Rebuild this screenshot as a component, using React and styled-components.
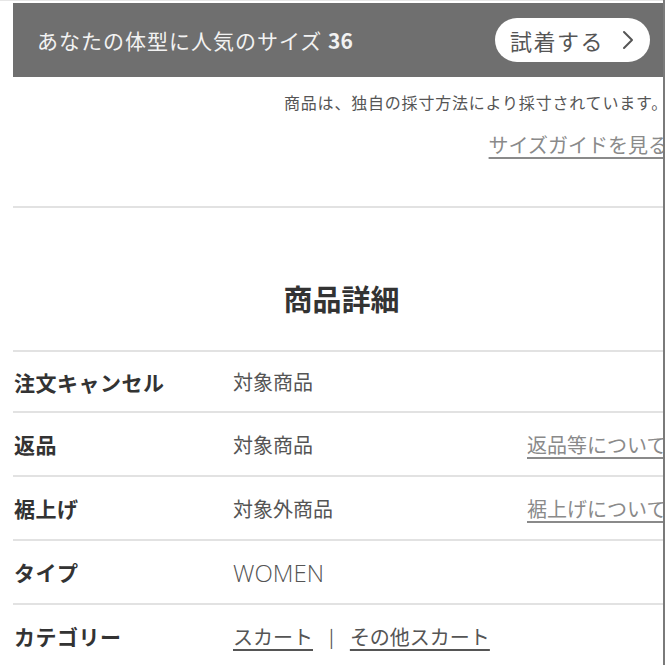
import React from 'react';
import styled, { createGlobalStyle } from 'styled-components';

const GlobalStyle = createGlobalStyle`
	html, body {
		margin: 0;
		padding: 0;
		background: #fff;
	}
	body {
		font-family: 'Noto Sans CJK JP', 'Noto Sans', sans-serif;
		color: #333;
	}
`;

const details = [
	{ label: '注文キャンセル', value: '対象商品', first: true },
	{ label: '返品', value: '対象商品', link: '返品等について' },
	{ label: '裾上げ', value: '対象外商品', link: '裾上げについて' },
	{ label: 'タイプ', value: 'WOMEN', latin: true },
	{ label: 'カテゴリー', categories: ['スカート', 'その他スカート'] },
];

const App = () => {
	return (
		<>
			<GlobalStyle />
			<Frame>
				<Page>
					<SizeBanner>
						<BannerText>
							あなたの体型に人気のサイズ <SizeNumber>36</SizeNumber>
						</BannerText>
						<TryButton>
							試着する
							<svg width='16' height='22' viewBox='0 0 16 22'>
								<path
									d='M4 3 L12 11 L4 19'
									fill='none'
									stroke='#555'
									strokeWidth='2'
									strokeLinecap='round'
									strokeLinejoin='round'
								/>
							</svg>
						</TryButton>
					</SizeBanner>

					<SizeNote>商品は、独自の採寸方法により採寸されています。</SizeNote>
					<GuideLink>サイズガイドを見る</GuideLink>

					<Divider />

					<SectionTitle>商品詳細</SectionTitle>

					<DetailTable>
						{details.map((row) => (
							<DetailRow key={row.label} $first={row.first}>
								<RowLabel>{row.label}</RowLabel>
								<RowValue $latin={row.latin}>
									{row.categories ? (
										<>
											<CategoryLink>{row.categories[0]}</CategoryLink>
											<Separator>|</Separator>
											<CategoryLink>{row.categories[1]}</CategoryLink>
										</>
									) : (
										row.value
									)}
								</RowValue>
								{row.link && <RowLink>{row.link}</RowLink>}
							</DetailRow>
						))}
					</DetailTable>
				</Page>
			</Frame>
		</>
	);
};

const Frame = styled.div`
	width: 663px;
	height: 665px;
	overflow: hidden;
	border-right: 2px solid #7a7a7a;
`;

const Page = styled.div`
	width: 655px;
	padding: 2px 0 0 13px;
	display: flex;
	flex-direction: column;
	border-top: 1px solid #e6e6e6;
`;

const SizeBanner = styled.div`
	height: 74px;
	background: #6f6f6f;
	display: flex;
	align-items: center;
	justify-content: space-between;
	padding: 0 18px 0 24px;
	box-sizing: border-box;
`;

const BannerText = styled.div`
	color: #f2f2f2;
	font-size: 21px;
	letter-spacing: 1px;
	line-height: 30px;
`;

const SizeNumber = styled.span`
	font-weight: 700;
	letter-spacing: 0;
`;

const TryButton = styled.div`
	width: 155px;
	height: 44px;
	border-radius: 22px;
	background: #fff;
	color: #555;
	font-size: 22px;
	letter-spacing: 1.5px;
	display: flex;
	align-items: center;
	box-sizing: border-box;
	padding: 0 14px 0 15px;
	justify-content: space-between;
`;

const SizeNote = styled.div`
	margin-top: 13px;
	font-size: 16px;
	line-height: 24px;
	letter-spacing: 0.8px;
	color: #555;
	text-align: right;
`;

const GuideLink = styled.a`
	align-self: flex-end;
	margin-top: 17px;
	font-size: 20px;
	line-height: 28px;
	color: #8a8a8a;
	text-decoration: underline;
	text-underline-offset: 4px;
`;

const Divider = styled.hr`
	margin: 47px 0 0;
	border: none;
	border-top: 2px solid #e2e2e2;
	width: 100%;
`;

const SectionTitle = styled.h2`
	margin: 70px 0 0;
	text-align: center;
	font-size: 29px;
	line-height: 40px;
	font-weight: 700;
	color: #333;
	padding-left: 2px;
`;

const DetailTable = styled.div`
	margin-top: 32px;
	display: flex;
	flex-direction: column;
`;

const DetailRow = styled.div`
	height: ${({ $first }) => ($first ? '61px' : '64px')};
	box-sizing: border-box;
	border-top: 2px solid #e2e2e2;
	display: grid;
	grid-template-columns: 220px 294px 1fr;
	align-items: center;
`;

const RowLabel = styled.div`
	padding-left: 1px;
	font-size: 21px;
	letter-spacing: 0.5px;
	font-weight: 700;
	color: #333;
`;

const RowValue = styled.div`
	font-size: ${({ $latin }) => ($latin ? '24px' : '20px')};
	font-family: ${({ $latin }) =>
		$latin ? "'Open Sans', 'Noto Sans', sans-serif" : 'inherit'};
	font-weight: ${({ $latin }) => ($latin ? 300 : 400)};
	color: #555;
	display: flex;
	align-items: center;
	white-space: nowrap;
`;

const RowLink = styled.a`
	font-size: 20px;
	color: #8a8a8a;
	text-decoration: underline;
	text-underline-offset: 4px;
	white-space: nowrap;
`;

const CategoryLink = styled.a`
	color: #555;
	text-decoration: underline;
	text-underline-offset: 4px;
`;

const Separator = styled.span`
	margin: 0 16px;
	color: #555;
	font-size: 18px;
`;

export default App;
